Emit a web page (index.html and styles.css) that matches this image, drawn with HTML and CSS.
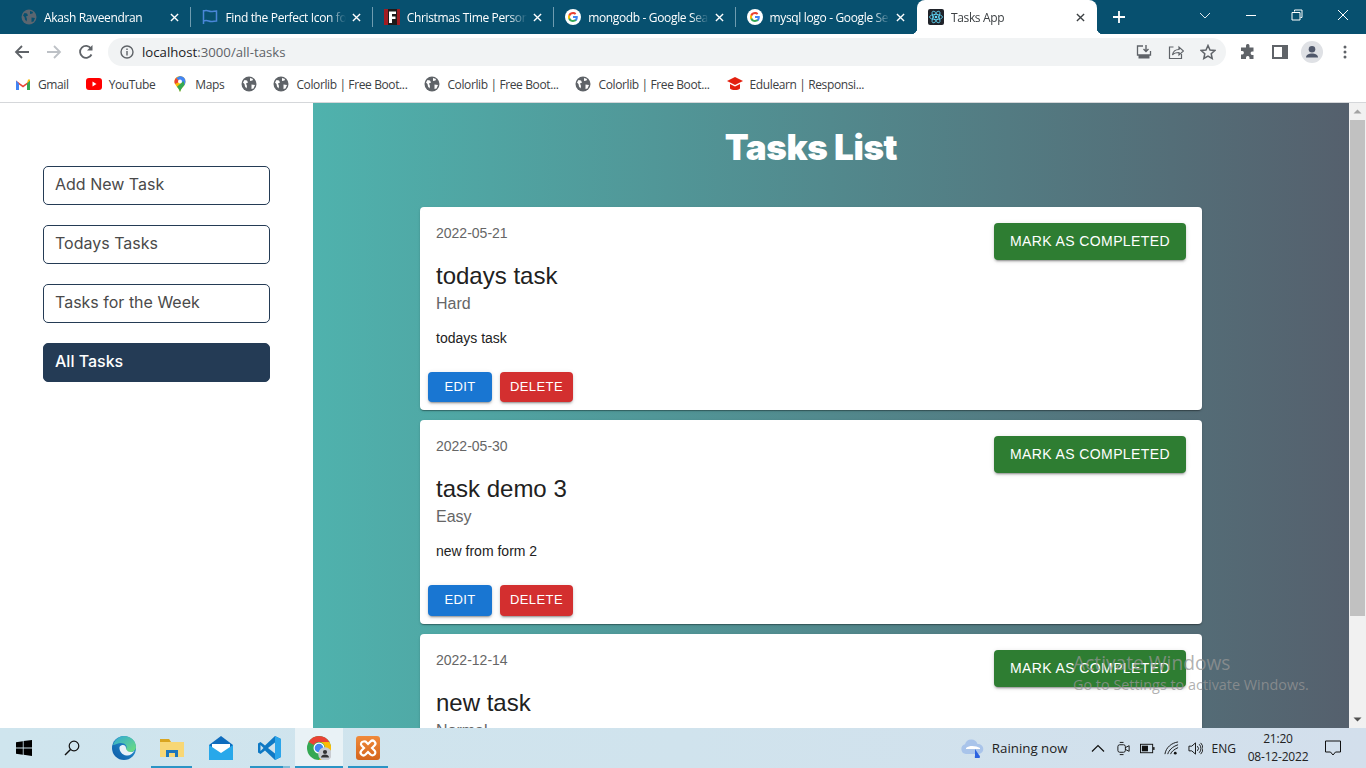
FILE: index.html
```html
<!DOCTYPE html>
<html lang="en">
<head>
<meta charset="utf-8">
<title>Tasks App</title>
<link rel="stylesheet" href="styles.css">
</head>
<body>
<svg class="defs" width="0" height="0">
  <defs>
    <symbol id="globe" viewBox="0 0 16 16">
      <circle cx="8" cy="8" r="7.500" fill="#5f6368"/>
      <path d="M3.500 4l2.500.5 1 2-2 1 1 2.500-.5 2.500-1.500-2-.5-2.500-1.500-1.500zM9 2l3 1-.5 1.500-2.500.5zM10.500 8.500l3.500.5-1.500 3.500-2 .5z" fill="#fff"/>
    </symbol>
    <symbol id="globe-dim" viewBox="0 0 16 16">
      <circle cx="8" cy="8" r="7.500" fill="#5b6670"/>
      <path d="M3.500 4l2.500.5 1 2-2 1 1 2.500-.5 2.500-1.500-2-.5-2.500-1.500-1.500zM9 2l3 1-.5 1.500-2.500.5zM10.500 8.500l3.500.5-1.500 3.500-2 .5z" fill="#07506f"/>
    </symbol>
    <symbol id="gicon" viewBox="0 0 16 16">
      <circle cx="8" cy="8" r="8" fill="#fff"/>
      <path d="M12.800 8.200c0-.4 0-.8-.1-1.100H8v2h2.700c-.1.700-.5 1.200-1 1.500v1.300h1.600c1-.9 1.500-2.200 1.500-3.700z" fill="#4285f4"/>
      <path d="M8 13c1.400 0 2.500-.5 3.300-1.200l-1.600-1.300c-.4.300-1 .5-1.700.5-1.300 0-2.400-.9-2.800-2.100H3.500v1.300C4.300 12 6 13 8 13z" fill="#34a853"/>
      <path d="M5.200 8.900c-.2-.6-.2-1.200 0-1.800V5.800H3.500c-.7 1.400-.7 3 0 4.400z" fill="#fbbc05"/>
      <path d="M8 5c.8 0 1.400.3 1.900.8l1.400-1.400C10.500 3.500 9.400 3 8 3 6 3 4.300 4 3.500 5.800l1.700 1.300C5.600 5.900 6.700 5 8 5z" fill="#ea4335"/>
    </symbol>
    <symbol id="close" viewBox="0 0 10 10">
      <path d="M1 1l8 8M9 1l-8 8" stroke="currentColor" stroke-width="1.500" fill="none"/>
    </symbol>
    <linearGradient id="edge-a" x1="0" y1="1" x2="1" y2="0"><stop offset="0" stop-color="#0c59a4"/><stop offset="1" stop-color="#2b9ad8"/></linearGradient>
    <linearGradient id="edge-b" x1="0" y1="0" x2="1" y2="1"><stop offset="0" stop-color="#2fa7d8"/><stop offset="1" stop-color="#6fe07a"/></linearGradient>
    <linearGradient id="xampp-g" x1="0" y1="0" x2="0" y2="1"><stop offset="0" stop-color="#f08a3a"/><stop offset="1" stop-color="#d4641c"/></linearGradient>
  </defs>
</svg>

<div class="tabstrip">
  <div class="tab sep"><svg class="fav"><use href="#globe-dim"/></svg><span class="tab-title">Akash Raveendran</span><svg class="tab-x"><use href="#close"/></svg></div>
  <div class="tab sep"><svg class="fav" viewBox="0 0 16 16"><path d="M1.500 1v14M1.500 2c4-1.500 5 .5 7.500.5s3.500-.5 5.500-.5v10c-2 0-3 .5-5.500.5S5.500 10.500 1.500 12" fill="none" stroke="#4a86d8" stroke-width="1.500"/></svg><span class="tab-title">Find the Perfect Icon for your</span><svg class="tab-x"><use href="#close"/></svg></div>
  <div class="tab sep"><svg class="fav" viewBox="0 0 16 16"><rect width="16" height="16" fill="#a01c22"/><rect x="4" width="9" height="16" fill="#1e1a1a"/><path d="M5 2.500h7v2.500H8v2.500h3.500V10H8v4H5z" fill="#fff"/></svg><span class="tab-title">Christmas Time Personalized</span><svg class="tab-x"><use href="#close"/></svg></div>
  <div class="tab sep"><svg class="fav"><use href="#gicon"/></svg><span class="tab-title">mongodb - Google Search</span><svg class="tab-x"><use href="#close"/></svg></div>
  <div class="tab"><svg class="fav"><use href="#gicon"/></svg><span class="tab-title">mysql logo - Google Search</span><svg class="tab-x"><use href="#close"/></svg></div>
  <div class="tab tab-active"><svg class="fav" viewBox="0 0 16 16"><rect width="16" height="16" rx="2" fill="#20232a"/><g fill="none" stroke="#61dafb" stroke-width=".8"><ellipse cx="8" cy="8" rx="6.500" ry="2.600"/><ellipse cx="8" cy="8" rx="6.500" ry="2.600" transform="rotate(60 8 8)"/><ellipse cx="8" cy="8" rx="6.500" ry="2.600" transform="rotate(120 8 8)"/></g><circle cx="8" cy="8" r="1.300" fill="#61dafb"/></svg><span class="tab-title">Tasks App</span><svg class="tab-x"><use href="#close"/></svg></div>
  <svg class="newtab" viewBox="0 0 12 12"><path d="M6 0v12M0 6h12" stroke="#fff" stroke-width="1.800"/></svg>
  <div class="winctl">
    <svg class="wc" viewBox="0 0 12 12"><path d="M1 4l5 5 5-5" fill="none" stroke="#dfe7ec"/></svg>
    <svg class="wc" viewBox="0 0 12 12"><path d="M1 6.500h10" stroke="#fff"/></svg>
    <svg class="wc" viewBox="0 0 12 12"><path d="M3.500 2.500v-1.500h7.500v7.500h-1.500M1 3.500h8v7.500h-8z" fill="none" stroke="#fff"/></svg>
    <svg class="wc" viewBox="0 0 12 12"><path d="M1 1l10 10M11 1l-10 10" stroke="#fff"/></svg>
  </div>
</div>

<div class="toolbar">
  <svg class="nav" viewBox="0 0 16 16"><path d="M15 8H2M8 2L2 8l6 6" fill="none" stroke="#5f6368" stroke-width="1.800"/></svg>
  <svg class="nav" viewBox="0 0 16 16"><path d="M1 8h13M8 2l6 6-6 6" fill="none" stroke="#bdc1c6" stroke-width="1.800"/></svg>
  <svg class="nav" viewBox="0 0 16 16"><path d="M13.500 10.500A6 6 0 1 1 13 4.500" fill="none" stroke="#5f6368" stroke-width="1.800"/><path d="M14.500 1v5.500H9z" fill="#5f6368"/></svg>
  <div class="omnibox">
    <svg class="info" viewBox="0 0 14 14"><circle cx="7" cy="7" r="6" fill="none" stroke="#5f6368" stroke-width="1.400"/><path d="M7 6v4.500M7 3.500v1.500" stroke="#5f6368" stroke-width="1.400"/></svg>
    <span class="url"><span class="url-host">localhost</span>:3000/all-tasks</span>
    <span class="omni-spacer"></span>
    <svg class="omni-ic" viewBox="0 0 16 16"><path d="M7 2H1.500v9h13V7" fill="none" stroke="#5f6368" stroke-width="1.300"/><path d="M10 1v6M7.500 5l2.500 2.500L12.500 5" fill="none" stroke="#5f6368" stroke-width="1.400"/><rect x="2.500" y="11" width="11" height="3.500" fill="#5f6368"/></svg>
    <svg class="omni-ic" viewBox="0 0 16 16"><path d="M5.500 3H1.500v11.500h12V10" fill="none" stroke="#5f6368" stroke-width="1.200"/><path d="M4.500 11c.5-3.500 3-5.500 6.500-5.500V3l4.500 4-4.500 4V8.500c-2.500 0-5 .5-6.500 2.500z" fill="none" stroke="#5f6368" stroke-width="1.200"/></svg>
    <svg class="omni-ic" viewBox="0 0 16 16"><path d="M8 1.500l2 4.500 4.800.5-3.600 3.200 1 4.800L8 12l-4.200 2.500 1-4.800L1.200 6.500 6 6z" fill="none" stroke="#5f6368" stroke-width="1.500"/></svg>
  </div>
  <svg class="tb-ic" viewBox="0 0 16 16"><path d="M6 1.500a1.800 1.800 0 0 1 3.500 0V3.500h4v4h-1.500a1.800 1.800 0 0 0 0 3.500h1.500v4h-4v-1.500a1.800 1.800 0 0 0-3.500 0V15H1v-4.500h1.500a1.800 1.800 0 0 0 0-3.500H1V3.500h5z" fill="#5f6368"/></svg>
  <svg class="tb-ic" viewBox="0 0 16 16"><path d="M1 2h14v12H1z" fill="none" stroke="#5f6368" stroke-width="2"/><rect x="10" y="2" width="5" height="12" fill="#5f6368"/></svg>
  <svg class="avatar" viewBox="0 0 22 22"><circle cx="11" cy="11" r="11" fill="#dfe1e5"/><circle cx="11" cy="8.300" r="3.300" fill="#50586b"/><path d="M5 16.500c0-2.800 3-4 6-4s6 1.200 6 4z" fill="#50586b"/></svg>
  <svg class="kebab" viewBox="0 0 4 14"><circle cx="2" cy="2" r="1.500" fill="#5f6368"/><circle cx="2" cy="7" r="1.500" fill="#5f6368"/><circle cx="2" cy="12" r="1.500" fill="#5f6368"/></svg>
</div>

<div class="bookmarks">
  <span class="bm"><svg class="bm-ic" viewBox="0 0 16 12"><path d="M1 12V2.500l7 5 7-5V12h-3V6.500L8 9.500 4 6.500V12z" fill="#ea4335"/><path d="M1 12h3V5.500L1 2.500z" fill="#4285f4"/><path d="M12 12h3V2.500l-3 3z" fill="#34a853"/><path d="M12 5.500l3-3V1.500l-2 0z" fill="#fbbc05"/></svg>Gmail</span>
  <span class="bm"><svg class="bm-ic" viewBox="0 0 16 12"><rect width="16" height="12" rx="3" fill="#f00"/><path d="M6.500 3.500v5l4-2.500z" fill="#fff"/></svg>YouTube</span>
  <span class="bm"><svg class="bm-ic" viewBox="0 0 16 16"><path d="M8 0a5.500 5.500 0 0 0-5.500 5.500C2.500 9.500 6.500 11 8 16c1.500-5 5.500-6.500 5.500-10.500A5.500 5.500 0 0 0 8 0z" fill="#fbbc05"/><path d="M8 0a5.500 5.500 0 0 1 5.500 5.500c0 1.500-.6 2.700-1.300 3.700L4 2z" fill="#4285f4"/><path d="M4 2l4 3.500L3 8a5.500 5.500 0 0 1 1-6z" fill="#ea4335"/><path d="M8 16c-.8-2.500-2-4-3-5.200L11.500 5l1 4c-1.500 2-3.500 3.500-4.500 7z" fill="#34a853"/><circle cx="8" cy="5.500" r="2" fill="#fff"/></svg>Maps</span>
  <span class="bm bm-solo"><svg class="bm-ic"><use href="#globe"/></svg></span>
  <span class="bm"><svg class="bm-ic"><use href="#globe"/></svg>Colorlib | Free Boot...</span>
  <span class="bm"><svg class="bm-ic"><use href="#globe"/></svg>Colorlib | Free Boot...</span>
  <span class="bm"><svg class="bm-ic"><use href="#globe"/></svg>Colorlib | Free Boot...</span>
  <span class="bm"><svg class="bm-ic" viewBox="0 0 16 14"><path d="M8 0l8 4-8 4-8-4z" fill="#e3200f"/><path d="M3 7l5 2.500L13 7v4.500C11 13.500 5 13.500 3 11.500z" fill="#e3200f"/></svg>Edulearn | Responsi...</span>
</div>

<div class="page">
  <aside class="sidebar">
    <a class="side-btn">Add New Task</a>
    <a class="side-btn">Todays Tasks</a>
    <a class="side-btn">Tasks for the Week</a>
    <a class="side-btn side-btn-active">All Tasks</a>
  </aside>
  <main class="main">
    <h1 class="heading">Tasks List</h1>
    <article class="card">
      <div class="card-content">
        <div class="card-top"><span class="date">2022-05-21</span><button class="btn btn-green">Mark as completed</button></div>
        <h2 class="task-title">todays task</h2>
        <div class="level">Hard</div>
        <p class="desc">todays task</p>
      </div>
      <div class="card-actions"><button class="btn btn-small btn-blue">Edit</button><button class="btn btn-small btn-red">Delete</button></div>
    </article>
    <article class="card">
      <div class="card-content">
        <div class="card-top"><span class="date">2022-05-30</span><button class="btn btn-green">Mark as completed</button></div>
        <h2 class="task-title">task demo 3</h2>
        <div class="level">Easy</div>
        <p class="desc">new from form 2</p>
      </div>
      <div class="card-actions"><button class="btn btn-small btn-blue">Edit</button><button class="btn btn-small btn-red">Delete</button></div>
    </article>
    <article class="card">
      <div class="card-content">
        <div class="card-top"><span class="date">2022-12-14</span><button class="btn btn-green">Mark as completed</button></div>
        <h2 class="task-title">new task</h2>
        <div class="level">Normal</div>
        <p class="desc">new task</p>
      </div>
    </article>
  </main>
  <div class="scrollbar">
    <svg class="sb-arrow" viewBox="0 0 17 17"><path d="M4.500 10.500l4-4 4 4z" fill="#a3a3a3"/></svg>
    <div class="sb-thumb"></div>
    <svg class="sb-arrow" viewBox="0 0 17 17"><path d="M4.500 6.500l4 4 4-4z" fill="#505050"/></svg>
  </div>
  <div class="watermark"><div class="wm-title">Activate Windows</div><div class="wm-sub">Go to Settings to activate Windows.</div></div>
</div>

<footer class="taskbar">
  <div class="tb-cell tb-win"><svg class="tk-ic" viewBox="0 0 16 16"><path d="M0 2.200l6.800-1v6.300H0zM7.600 1l8.400-1v7.500H7.600zM0 8.400h6.800v6.400L0 13.800zM7.600 8.400H16V16l-8.400-1.200z" fill="#000"/></svg></div>
  <div class="tb-cell tb-search"><svg class="tk-ic" viewBox="0 0 16 16"><circle cx="10" cy="6" r="4.800" fill="none" stroke="#111" stroke-width="1.200"/><path d="M6.500 9.500L1 15" stroke="#111" stroke-width="1.400"/></svg></div>
  <div class="tb-cell tb-edge"><svg class="tk-app" viewBox="0 0 24 24"><circle cx="12" cy="12" r="12" fill="url(#edge-a)"/><path d="M1 9C3 3 8 0 12 0c7 0 12 5 12 11 0 3-3 5-6 5-3 0-4-1.500-4-3 2-3-1-6-5-6-3 0-6 2-8 2z" fill="url(#edge-b)"/><path d="M7.500 11c2-3 6.500-2.500 6.500 1 0 2.500 2.500 4 5 4 1.500 0 2.500-.5 3.500-1-2 3-5 5-8 4.500-4.500-.5-7.500-4.500-7-8.500z" fill="#fff" fill-opacity=".9"/></svg></div>
  <div class="tb-cell tb-run tb-files"><svg class="tk-app" viewBox="0 0 24 24"><path d="M0 3h9l2 3h13v15H0z" fill="#f8d775"/><path d="M0 3h9l2 3H0z" fill="#d9a520"/><path d="M6 21v-7h12v7h-3v-4H9v4z" fill="#1d76bb"/></svg></div>
  <div class="tb-cell tb-mail"><svg class="tk-app" viewBox="0 0 24 24"><path d="M0 9L12 0l12 9v15H0z" fill="#0f6cbd"/><path d="M3 8h18v8l-9 5-9-5z" fill="#fff"/><path d="M0 9l12 8 12-8v15H0z" fill="#28a8ea"/></svg></div>
  <div class="tb-cell tb-run tb-code"><svg class="tk-app" viewBox="0 0 24 24"><path d="M17 0l6 3v18l-6 3L7 14.500 2.500 18 0 16.500V7.500L2.500 6 7 9.500z" fill="#0f79c4"/><path d="M17 6.500L10 12l7 5.500z" fill="#d0e3ed"/><path d="M2.500 9v6L5.500 12z" fill="#d0e3ed"/><path d="M17 0l6 3v18l-6 3z" fill="#2ba5ea"/></svg></div>
  <div class="tb-cell tb-run tb-chrome"><svg class="tk-app" viewBox="0 0 24 24"><circle cx="12" cy="12" r="12" fill="#34a853"/><path d="M12 0a12 12 0 0 1 10.400 6H12a6 6 0 0 0-5.200 3L1.600 6A12 12 0 0 1 12 0z" fill="#ea4335"/><path d="M22.400 6A12 12 0 0 1 12 24l5.200-9A6 6 0 0 0 12 6z" fill="#fbbc05"/><circle cx="12" cy="12" r="5.500" fill="#fff"/><circle cx="12" cy="12" r="4.300" fill="#4285f4"/><circle cx="18" cy="18" r="6.800" fill="#c9ccd1"/><circle cx="18" cy="16" r="2.100" fill="#333"/><path d="M14 21.500c0-2 2-3 4-3s4 1 4 3z" fill="#333"/></svg></div>
  <div class="tb-cell tb-run tb-xampp"><svg class="tk-app" viewBox="0 0 24 24"><rect width="24" height="24" rx="3" fill="url(#xampp-g)"/><path d="M7.500 5.500a2.500 2.500 0 0 0-2 4L8 12l-2.500 2.500a2.500 2.500 0 0 0 4 4L12 16l2.500 2.500a2.500 2.500 0 0 0 4-4L16 12l2.500-2.500a2.500 2.500 0 0 0-4-4L12 8 9.500 5.500a2.500 2.500 0 0 0-2 0z" fill="none" stroke="#fff" stroke-width="2.200"/></svg></div>
  <div class="tray">
    <svg class="weather" viewBox="0 0 24 20"><path d="M6 16a5 5 0 0 1-1-9.800A6.500 6.500 0 0 1 17.500 6 5 5 0 0 1 19 16z" fill="#a9c4ea"/><path d="M6 10c4-3 10-2 14 0v1H6z" fill="#fff"/><path d="M15 11l4 6a2.500 2.500 0 1 1-4 1z" fill="#2c62e0"/></svg>
    <span class="weather-text">Raining now</span>
    <svg class="tray-ic tray-chev" viewBox="0 0 14 14"><path d="M1 10l6-6 6 6" fill="none" stroke="#111" stroke-width="1.200"/></svg>
    <svg class="tray-ic" viewBox="0 0 14 16"><rect x="1" y="4" width="8" height="8" rx="2" fill="none" stroke="#111"/><path d="M9 7l4-2v6l-4-2M3 1.500h4M3 14.500h4" fill="none" stroke="#111"/></svg>
    <svg class="tray-ic" viewBox="0 0 16 12"><rect x=".5" y="1.500" width="13" height="9" fill="none" stroke="#111"/><rect x="2" y="3" width="6.500" height="6" fill="#111"/><rect x="14" y="4.500" width="1.500" height="3" fill="#111"/></svg>
    <svg class="tray-ic" viewBox="0 0 16 16"><path d="M1 14C2 7 8 2 15 1M4 14c1-4 5-8 11-10M7 14c1-3 4-5 8-7" fill="none" stroke="#111" stroke-width="1"/><circle cx="12" cy="13" r="1.500" fill="#111"/></svg>
    <svg class="tray-ic" viewBox="0 0 16 16"><path d="M1 5.500h3l4-3.500v12l-4-3.500H1z" fill="none" stroke="#111"/><path d="M10 5.500a3.500 3.500 0 0 1 0 5M12 3.500a6.500 6.500 0 0 1 0 9M13.500 2a8.500 8.500 0 0 1 0 12" fill="none" stroke="#111"/></svg>
    <span class="lang">ENG</span>
    <div class="clock"><div>21:20</div><div>08-12-2022</div></div>
    <svg class="notify" viewBox="0 0 16 16"><path d="M.5 1h15v11h-5L8 15l-2.500-3h-5z" fill="none" stroke="#111"/></svg>
  </div>
</footer>
</body>
</html>
```
FILE: styles.css
```css
* { box-sizing: border-box; }
html, body { margin: 0; padding: 0; }
body {
  width: 1366px;
  height: 768px;
  overflow: hidden;
  display: flex;
  flex-direction: column;
  font-family: "Open Sans", "Liberation Sans", sans-serif;
  background: #fff;
}
.defs { display: block; height: 0; }

/* tab strip */
.tabstrip {
  flex: 0 0 34px;
  display: flex;
  align-items: stretch;
  padding-left: 10px;
  background: #07506f;
  color: #fff;
}
.tab {
  position: relative;
  width: 181.400px;
  display: flex;
  align-items: center;
  padding: 0 12px 0 11px;
  font-size: 12px;
  letter-spacing: -.35px;
}
.tab.sep::after {
  content: "";
  position: absolute;
  right: 0;
  top: 7px;
  bottom: 7px;
  width: 1px;
  background: #6f9cb0;
}
.tab-active {
  width: 180px;
  background: #fff;
  color: #3c4043;
  border-radius: 8px 8px 0 0;
}
.tab-active::before,
.tab-active::after {
  content: "";
  position: absolute;
  bottom: 0;
  width: 6px;
  height: 6px;
}
.tab-active::before {
  left: -6px;
  background: radial-gradient(circle at 0 0, #07506f 6px, #fff 6.500px);
}
.tab-active::after {
  right: -6px;
  background: radial-gradient(circle at 100% 0, #07506f 6px, #fff 6.500px);
}
.fav { flex: none; width: 16px; height: 16px; margin-right: 7px; }
.tab-title {
  flex: 1;
  min-width: 0;
  overflow: hidden;
  white-space: nowrap;
  -webkit-mask-image: linear-gradient(to right, #000 85%, transparent 100%);
  mask-image: linear-gradient(to right, #000 85%, transparent 100%);
}
.tab-x { flex: none; width: 9px; height: 9px; margin-left: 6px; }
.newtab { flex: none; width: 12px; height: 12px; margin: 11px 0 0 16px; }
.winctl { margin-left: auto; display: flex; align-items: center; height: 30px; }
.wc { width: 12px; height: 12px; margin: 0 17px; }

/* toolbar */
.toolbar {
  flex: 0 0 36px;
  display: flex;
  align-items: center;
  background: #fff;
  padding: 0 0 0 14px;
}
.nav { flex: none; width: 16px; height: 16px; margin-right: 16px; }
.omnibox {
  flex: none;
  width: 1118px;
  height: 28px;
  margin-left: -2px;
  display: flex;
  align-items: center;
  background: #f1f3f4;
  border-radius: 14px;
  padding: 0 10px 0 12px;
}
.info { flex: none; width: 14px; height: 14px; margin-right: 8px; }
.url { font-size: 13.200px; color: #5f6368; }
.url-host { color: #202124; }
.omni-spacer { flex: 1; }
.omni-ic { flex: none; width: 16px; height: 16px; margin-left: 16px; }
.tb-ic { flex: none; width: 16px; height: 16px; margin-left: 16px; }
.omnibox + .tb-ic { margin-left: 14px; }
.avatar { flex: none; width: 22px; height: 22px; margin-left: 13px; }
.kebab { flex: none; width: 4px; height: 14px; margin-left: 20px; }

/* bookmarks */
.bookmarks {
  flex: 0 0 33px;
  display: flex;
  align-items: center;
  padding: 0 0 4px 15px;
  background: #fff;
  border-bottom: 1px solid #d5d7da;
  font-size: 12px;
  letter-spacing: -.38px;
  color: #3c4043;
}
.bm { display: flex; align-items: center; margin-right: 17px; white-space: nowrap; }
.bm-ic { flex: none; width: 16px; height: 16px; margin-right: 7px; }
.bm-solo { margin-right: 16px; }
.bm-solo .bm-ic { margin-right: 0; }

/* page */
.page {
  position: relative;
  flex: 1;
  min-height: 0;
  display: flex;
  overflow: hidden;
  background: #fff;
}
.sidebar {
  flex: 0 0 313px;
  display: flex;
  flex-direction: column;
  gap: 20px;
  padding: 63px 43px 0;
}
.side-btn {
  height: 39px;
  display: flex;
  align-items: center;
  padding: 0 0 4px 11px;
  border: 1px solid #243b55;
  border-radius: 5px;
  font-family: Inter, "Liberation Sans", sans-serif;
  font-size: 16px;
  color: #4a4a4a;
}
.side-btn-active { background: #243b55; color: #fff; font-weight: 500; }

.main {
  flex: 1;
  min-width: 0;
  padding: 22px 40px 0 0;
  background: linear-gradient(to right, #4fb2ad, #55606d);
}
.heading {
  margin: 0 0 37.800px;
  text-align: center;
  font-family: Inter, "Liberation Sans", sans-serif;
  font-size: 35px;
  line-height: 44px;
  font-weight: 900;
  letter-spacing: -.4px;
  color: #fff;
}
.card {
  width: 782px;
  margin: 0 auto 10px;
  background: #fff;
  border-radius: 4px;
  box-shadow: 0 2px 1px -1px rgba(0,0,0,.2), 0 1px 1px rgba(0,0,0,.14), 0 1px 3px rgba(0,0,0,.12);
  font-family: "Liberation Sans", Arial, sans-serif;
}
.card-content { padding: 16px; }
.card-top { display: flex; justify-content: space-between; align-items: flex-start; }
.date { font-size: 14px; line-height: 20px; color: #666; }
.task-title { margin: 0; font-size: 24px; line-height: 32px; font-weight: 400; color: #212121; }
.level { font-size: 16px; line-height: 24px; color: #666; }
.desc { margin: 12px 0 0; font-size: 14px; line-height: 20px; color: #222; }
.btn {
  height: 37px;
  padding: 0 16px 1px;
  border: 0;
  border-radius: 4px;
  font-family: "Liberation Sans", Arial, sans-serif;
  font-size: 14px;
  letter-spacing: .4px;
  text-transform: uppercase;
  color: #fff;
  box-shadow: 0 3px 1px -2px rgba(0,0,0,.2), 0 2px 2px rgba(0,0,0,.14), 0 1px 5px rgba(0,0,0,.12);
}
.btn-small { height: 30.500px; min-width: 64px; padding: 0 10px 2px; font-size: 13px; }
.btn-green { background: #2e7d32; }
.btn-blue { background: #1976d2; }
.btn-red { background: #d32f2f; }
.card-actions { display: flex; gap: 8px; padding: 8px; }

/* scrollbar */
.scrollbar {
  flex: 0 0 17px;
  display: flex;
  flex-direction: column;
  background: #f1f1f1;
}
.sb-arrow { flex: none; width: 17px; height: 17px; }
.sb-thumb { flex: 0 0 496px; background: #c1c1c1; margin: 0 1px auto; }

.watermark {
  position: absolute;
  left: 1073px;
  top: 547px;
  color: rgba(150,150,150,.75);
  pointer-events: none;
}
.wm-title { font-size: 19.200px; line-height: 26px; }
.wm-sub { font-size: 14.400px; line-height: 18px; }

/* taskbar */
.taskbar {
  flex: 0 0 40px;
  display: flex;
  align-items: center;
  background: linear-gradient(to right, #cfe5ee 0%, #d0e3ed 50%, #d3dfec 100%);
}
.tb-cell { position: relative; height: 40px; display: flex; align-items: center; justify-content: center; }
.tk-ic { width: 16px; height: 16px; }
.tk-app { width: 24px; height: 24px; }
.tb-win { width: 48px; }
.tb-search { width: 48px; }
.tb-edge { width: 55px; }
.tb-files { width: 41px; margin-right: 5px; }
.tb-mail { width: 48px; margin-right: 5px; }
.tb-code { width: 40px; margin-right: 5px; }
.tb-chrome { width: 48px; background: #e9f2f6; margin-right: 5px; }
.tb-xampp { width: 40px; }
.tb-run::after {
  content: "";
  position: absolute;
  left: 0; right: 0; bottom: 0;
  height: 2px;
  background: #2b94c5;
}
.tb-code::after { background: linear-gradient(to right, #2b94c5 83%, #7fbcd8 83%); }
.tray { margin-left: auto; display: flex; align-items: center; height: 40px; }
.weather { width: 24px; height: 20px; margin-right: 8px; }
.weather-text { font-size: 13.300px; color: #222; margin-right: 23px; }
.tray-ic { width: 15px; height: 15px; margin-right: 9px; flex: none; }
.tray-chev { width: 14px; margin-right: 11px; }
.lang { font-size: 12px; color: #222; margin: 0 7px 0 0; }
.clock { width: 70px; text-align: center; font-size: 12px; letter-spacing: -.2px; line-height: 18px; color: #222; }
.notify { width: 16px; height: 16px; margin: 0 25px 0 12px; }
```
